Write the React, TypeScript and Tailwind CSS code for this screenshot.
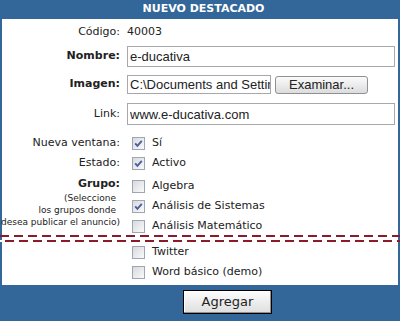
import React from "react";

function Check({ on }: { on?: boolean }) {
  return (
    <svg width="13" height="13" viewBox="0 0 13 13" className="shrink-0" aria-hidden="true">
      <defs>
        <linearGradient id="cbfill" x1="0" y1="0" x2="1" y2="1">
          <stop offset="0" stopColor="#d6d8dc" />
          <stop offset="1" stopColor="#fbfbfb" />
        </linearGradient>
      </defs>
      <rect x="0.5" y="0.5" width="12" height="12" fill="url(#cbfill)" stroke="#9ea6b4" />
      {on && (
        <path d="M3.2 6.4 L5.4 8.8 L9.8 3.9" stroke="#4d5d9e" strokeWidth="1.9" fill="none" />
      )}
    </svg>
  );
}

function Option({ label, on }: { label: string; on?: boolean }) {
  return (
    <div className="flex items-center h-[20px] pl-[5px] gap-[7px]">
      <Check on={on} />
      <span>{label}</span>
    </div>
  );
}

const inputCls =
  "h-full border border-[#a7a8ab] bg-white pl-[2px] font-['Liberation_Sans',Arial,sans-serif] text-[13px] text-[#222] outline-none";

export default function App() {
  return (
    <div className="w-[400px] h-[321px] bg-[#336699] flex flex-col font-['DejaVu_Sans',Verdana,sans-serif] text-[11px] text-[#222]">
      {/* Title */}
      <div className="h-[19px] flex items-center justify-center pl-[7px] text-white font-bold">
        NUEVO DESTACADO
      </div>

      <div className="mx-[2px] h-[266px] bg-white flex flex-col">
        <div className="grid grid-cols-[118px_1fr] gap-x-[7px] items-center mt-[4px] h-[18px]">
          <span className="text-right">Código:</span>
          <span>40003</span>
        </div>

        <div className="grid grid-cols-[118px_1fr] gap-x-[7px] items-center mt-[5px] h-[21px]">
          <span className="text-right font-bold">Nombre:</span>
          <input readOnly defaultValue="e-ducativa" className={inputCls + " w-[268px]"} />
        </div>

        <div className="grid grid-cols-[118px_1fr] gap-x-[7px] items-center mt-[7px] h-[21px]">
          <span className="text-right font-bold">Imagen:</span>
          <div className="flex items-center gap-[4px] h-[19px]">
            <input
              readOnly
              defaultValue={"C:\\Documents and Settings\\Usuario\\Escritorio\\logo.gif"}
              className={inputCls + " w-[144px]"}
            />
            <button className="w-[93px] h-[18px] rounded-[3px] border border-[#8e9093] bg-gradient-to-b from-[#fbfbfb] to-[#dcdcdc] font-['Liberation_Sans',Arial,sans-serif] text-[13px] text-[#222] leading-none">
              Examinar...
            </button>
          </div>
        </div>

        <div className="grid grid-cols-[118px_1fr] gap-x-[7px] items-center mt-[8px] h-[22px]">
          <span className="text-right">Link:</span>
          <input readOnly defaultValue="www.e-ducativa.com" className={inputCls + " w-[268px]"} />
        </div>

        <div className="grid grid-cols-[118px_1fr] gap-x-[7px] items-center mt-[8px]">
          <span className="text-right">Nueva ventana:</span>
          <Option label="Sí" on />
        </div>

        <div className="grid grid-cols-[118px_1fr] gap-x-[7px] items-center h-[21px]">
          <span className="text-right">Estado:</span>
          <Option label="Activo" on />
        </div>

        {/* Grupos */}
        <div className="grid grid-cols-[118px_1fr] gap-x-[7px] items-start mt-[2px] h-[59px]">
          <div className="flex flex-col items-end">
            <span className="font-bold leading-[16px]">Grupo:</span>
            <span className="text-[9px] leading-[12px] mr-[4px]">(Seleccione</span>
            <span className="text-[9px] leading-[12px] mr-[4px]">los grupos donde</span>
            <span className="text-[9px] leading-[12px] whitespace-nowrap">desea publicar el anuncio)</span>
          </div>
          <div className="flex flex-col">
            <Option label="Algebra" />
            <Option label="Análisis de Sistemas" on />
            <Option label="Análisis Matemático" />
          </div>
        </div>

        {/* cut marks */}
        <div className="-mx-[2px] h-[2px] shrink-0 bg-[repeating-linear-gradient(90deg,#8b1a2a_0px,#8b1a2a_9px,#ffffff_9px,#ffffff_14px)]" />
        <div className="-mx-[2px] mt-[3px] h-[2px] shrink-0 bg-[repeating-linear-gradient(90deg,#ffffff_0px,#ffffff_5px,#8b1a2a_5px,#8b1a2a_14px)]" />

        <div className="grid grid-cols-[118px_1fr] gap-x-[7px]">
          <span />
          <div className="flex flex-col">
            <Option label="Twitter" />
            <Option label="Word básico (demo)" />
          </div>
        </div>
      </div>

      <div className="flex-1 pt-[5px]">
        <button className="ml-[183px] w-[89px] h-[24px] border border-black bg-gradient-to-b from-[#fdfdfd] to-[#dedede] shadow-[inset_-1px_-1px_0_#8f8f8f,inset_1px_1px_0_#ffffff] text-[13px] text-[#222]">
          Agregar
        </button>
      </div>
    </div>
  );
}
